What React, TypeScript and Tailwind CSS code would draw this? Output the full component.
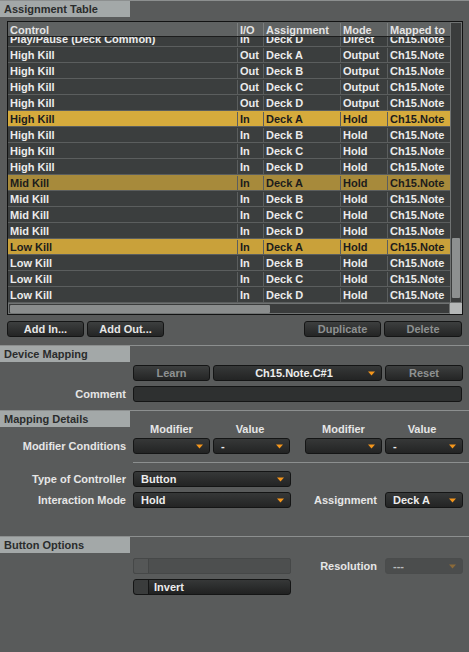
import React from 'react';

type Row = { c: string; io: string; a: string; m: string; t: string; hl?: 'high' | 'mid' | 'low' };

const rows: Row[] = [
  { c: 'Play/Pause (Deck Common)', io: 'In', a: 'Deck D', m: 'Direct', t: 'Ch15.Note' },
  { c: 'High Kill', io: 'Out', a: 'Deck A', m: 'Output', t: 'Ch15.Note' },
  { c: 'High Kill', io: 'Out', a: 'Deck B', m: 'Output', t: 'Ch15.Note' },
  { c: 'High Kill', io: 'Out', a: 'Deck C', m: 'Output', t: 'Ch15.Note' },
  { c: 'High Kill', io: 'Out', a: 'Deck D', m: 'Output', t: 'Ch15.Note' },
  { c: 'High Kill', io: 'In', a: 'Deck A', m: 'Hold', t: 'Ch15.Note', hl: 'high' },
  { c: 'High Kill', io: 'In', a: 'Deck B', m: 'Hold', t: 'Ch15.Note' },
  { c: 'High Kill', io: 'In', a: 'Deck C', m: 'Hold', t: 'Ch15.Note' },
  { c: 'High Kill', io: 'In', a: 'Deck D', m: 'Hold', t: 'Ch15.Note' },
  { c: 'Mid Kill', io: 'In', a: 'Deck A', m: 'Hold', t: 'Ch15.Note', hl: 'mid' },
  { c: 'Mid Kill', io: 'In', a: 'Deck B', m: 'Hold', t: 'Ch15.Note' },
  { c: 'Mid Kill', io: 'In', a: 'Deck C', m: 'Hold', t: 'Ch15.Note' },
  { c: 'Mid Kill', io: 'In', a: 'Deck D', m: 'Hold', t: 'Ch15.Note' },
  { c: 'Low Kill', io: 'In', a: 'Deck A', m: 'Hold', t: 'Ch15.Note', hl: 'low' },
  { c: 'Low Kill', io: 'In', a: 'Deck B', m: 'Hold', t: 'Ch15.Note' },
  { c: 'Low Kill', io: 'In', a: 'Deck C', m: 'Hold', t: 'Ch15.Note' },
  { c: 'Low Kill', io: 'In', a: 'Deck D', m: 'Hold', t: 'Ch15.Note' },
];

const rowColor = (hl?: Row['hl']) => {
  if (hl === 'high') return 'bg-[#d6ab3c] text-[#1c1c1c]';
  if (hl === 'mid') return 'bg-[#a78a3b] text-[#1c1c1c]';
  if (hl === 'low') return 'bg-[#c9a13a] text-[#1c1c1c]';
  return 'bg-[#3b3e3e] text-[#ebebeb]';
};

const SectionHeader = ({ title }: { title: string }) => (
  <div className="flex h-[17px] border-t border-[#8c8f8f]">
    <div className="w-[130px] bg-[#a3a8a8] pl-[4px] text-[#2a2c2c] leading-[16px]">{title}</div>
  </div>
);

const Arrow = ({ dim }: { dim?: boolean }) => (
  <svg width="7" height="5" viewBox="0 0 7 5" className="shrink-0">
    <path d="M0 0.5 H7 L3.5 4.5 Z" fill={dim ? '#8a6a3a' : '#f4961c'} />
  </svg>
);

const Btn = ({ label, w, disabled }: { label: string; w: string; disabled?: boolean }) => (
  <div
    className={`${w} h-[16px] flex items-center justify-center rounded-[3px] border border-[#141515] bg-gradient-to-b from-[#3d3f3f] to-[#242525] leading-[14px] ${
      disabled ? 'text-[#8e9191]' : 'text-[#e6e6e6]'
    }`}
  >
    {label}
  </div>
);

const Drop = ({ label, w, center, disabled }: { label: string; w: string; center?: boolean; disabled?: boolean }) => (
  <div
    className={`${w} h-[16px] flex items-center rounded-[3px] border pr-[6px] ${
      disabled
        ? 'border-[#4a4c4c] bg-[#4b4d4d] text-[#b9bcbc]'
        : 'border-[#141515] bg-gradient-to-b from-[#363838] to-[#232424] text-[#ececec]'
    }`}
  >
    <div className={`flex-1 whitespace-nowrap leading-[14px] ${center ? 'text-center pl-[6px]' : 'pl-[7px]'}`}>{label}</div>
    <Arrow dim={disabled} />
  </div>
);

const Label = ({ text }: { text: string }) => (
  <div className="w-[126px] text-right text-[#e6e6e6] whitespace-nowrap">{text}</div>
);

export default function App() {
  return (
    <div className="w-[469px] h-[652px] bg-[#595b5b] overflow-hidden font-['Liberation_Sans',Arial,sans-serif] text-[11px] font-bold">
      <SectionHeader title="Assignment Table" />

      {/* table */}
      <div className="ml-[7px] mt-[4px] w-[456px] h-[294px] border border-[#121313] bg-[#3b3e3e] flex flex-col">
        <div className="flex flex-1">
          <div className="w-[442px] flex flex-col">
            <div className="flex h-[15px] bg-[#5f6262] text-[#e4e4e4] leading-[14px] pt-[1px] border-b border-[#1c1d1d]">
              <div className="w-[229px] pl-[2px]">Control</div>
              <div className="w-[26px] pl-[2px] border-l border-[#7b7e7e]">I/O</div>
              <div className="w-[77px] pl-[2px] border-l border-[#7b7e7e]">Assignment</div>
              <div className="w-[47px] pl-[2px] border-l border-[#7b7e7e]">Mode</div>
              <div className="w-[63px] pl-[2px] border-l border-[#7b7e7e]">Mapped to</div>
            </div>
            <div className="h-[266px] overflow-hidden">
              <div className="-mt-[6px]">
                {rows.map((r, i) => (
                  <div key={i} className={`flex h-[16px] border-b border-[#5b5e5e] leading-[14px] pt-[1px] ${rowColor(r.hl)}`}>
                    <div className="w-[229px] pl-[2px] whitespace-nowrap overflow-hidden">{r.c}</div>
                    <div className="w-[26px] pl-[2px] border-l border-[#5b5e5e] whitespace-nowrap overflow-hidden">{r.io}</div>
                    <div className="w-[77px] pl-[2px] border-l border-[#5b5e5e] whitespace-nowrap overflow-hidden">{r.a}</div>
                    <div className="w-[47px] pl-[2px] border-l border-[#5b5e5e] whitespace-nowrap overflow-hidden">{r.m}</div>
                    <div className="w-[63px] pl-[2px] border-l border-[#5b5e5e] whitespace-nowrap overflow-hidden">{r.t}</div>
                  </div>
                ))}
              </div>
            </div>
          </div>
          {/* vertical scrollbar */}
          <div className="w-[12px] bg-[#3a3c3c] border border-[#707373] flex flex-col">
            <div className="flex-1" />
            <div className="h-[60px] mx-[1px] mb-[4px] bg-[#8d9090] rounded-[1px]" />
          </div>
        </div>
        {/* horizontal scrollbar */}
        <div className="flex h-[11px]">
          <div className="w-[442px] border border-[#707373] bg-[#3a3c3c] flex items-center px-[1px]">
            <div className="w-[260px] h-[8px] bg-[#8a8d8d] rounded-[1px]" />
          </div>
          <div className="w-[12px] bg-[#b5b8b8]" />
        </div>
      </div>

      <div className="flex mt-[6px] px-[7px] h-[16px]">
        <Btn label="Add In..." w="w-[77px]" />
        <div className="w-[3px]" />
        <Btn label="Add Out..." w="w-[77px]" />
        <div className="flex-1" />
        <Btn label="Duplicate" w="w-[77px]" disabled />
        <div className="w-[3px]" />
        <Btn label="Delete" w="w-[78px]" disabled />
      </div>

      <div className="mt-[8px]">
        <SectionHeader title="Device Mapping" />
      </div>
      <div className="flex mt-[3px] pl-[133px] h-[16px]">
        <Btn label="Learn" w="w-[77px]" disabled />
        <div className="w-[3px]" />
        <Drop label="Ch15.Note.C#1" w="w-[169px]" center />
        <div className="w-[3px]" />
        <Btn label="Reset" w="w-[78px]" disabled />
      </div>
      <div className="flex items-center mt-[5px] h-[16px]">
        <Label text="Comment" />
        <div className="ml-[7px] w-[329px] h-[16px] rounded-[3px] border border-[#141515] bg-[#2e3030]" />
      </div>

      <div className="mt-[8px]">
        <SectionHeader title="Mapping Details" />
      </div>
      <div className="flex pl-[133px] h-[12px] leading-[12px] text-[#e6e6e6] -mt-[4px]">
        <div className="w-[77px] text-center">Modifier</div>
        <div className="w-[80px] text-center">Value</div>
        <div className="w-[15px]" />
        <div className="w-[77px] text-center">Modifier</div>
        <div className="w-[80px] text-center">Value</div>
      </div>
      <div className="flex items-center mt-[3px] h-[16px]">
        <Label text="Modifier Conditions" />
        <div className="ml-[7px] flex">
          <Drop label="" w="w-[77px]" />
          <div className="w-[3px]" />
          <Drop label="-" w="w-[77px]" />
          <div className="w-[15px]" />
          <Drop label="" w="w-[77px]" />
          <div className="w-[3px]" />
          <Drop label="-" w="w-[78px]" />
        </div>
      </div>
      <div className="ml-[133px] mt-[8px] h-px bg-[#8c8f8f]" />
      <div className="flex items-center mt-[8px] h-[16px]">
        <Label text="Type of Controller" />
        <div className="ml-[7px]">
          <Drop label="Button" w="w-[158px]" />
        </div>
      </div>
      <div className="flex items-center mt-[5px] h-[16px]">
        <Label text="Interaction Mode" />
        <div className="ml-[7px]">
          <Drop label="Hold" w="w-[158px]" />
        </div>
        <div className="w-[86px] text-right text-[#e6e6e6]">Assignment</div>
        <div className="ml-[8px]">
          <Drop label="Deck A" w="w-[78px]" />
        </div>
      </div>

      <div className="mt-[28px]">
        <SectionHeader title="Button Options" />
      </div>
      <div className="flex items-center mt-[5px] h-[16px]">
        <div className="ml-[133px] w-[158px] h-[16px] flex rounded-[2px] border border-[#464848] bg-[#4d4f4f]">
          <div className="w-[15px] h-full border-r border-[#444646] bg-[#555757] rounded-l-[2px]" />
        </div>
        <div className="w-[86px] text-right text-[#e6e6e6]">Resolution</div>
        <div className="ml-[8px]">
          <Drop label="---" w="w-[78px]" disabled />
        </div>
      </div>
      <div className="flex items-center mt-[5px] h-[16px]">
        <div className="ml-[133px] w-[158px] h-[16px] flex items-center rounded-[3px] border border-[#141515] bg-gradient-to-b from-[#363838] to-[#202121]">
          <div className="w-[15px] h-full border-r border-[#141515] bg-[#3a3c3c] rounded-l-[3px]" />
          <div className="pl-[5px] text-[#ececec] leading-[14px]">Invert</div>
        </div>
      </div>
    </div>
  );
}
